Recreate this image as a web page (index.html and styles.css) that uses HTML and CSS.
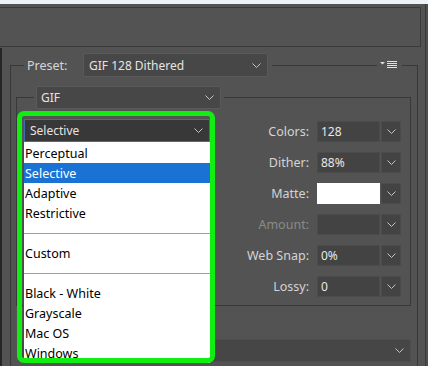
FILE: index.html
```html
<!DOCTYPE html>
<html>
<head>
<meta charset="utf-8">
<link rel="stylesheet" href="styles.css">
</head>
<body>
<div class="topstrip"></div>
<div class="app">
  <div class="main">
    <div class="toppanel"></div>
    <div class="content">
      <div class="outer">
        <div class="outer-head">
          <div class="mask mask-preset">
            <span class="lbl lbl-preset">Preset:</span>
            <div class="dd dd-preset"><span class="dd-text">GIF 128 Dithered</span><svg class="chev" width="9" height="5" viewBox="0 0 9 5"><polyline points="0.5,0.5 4.5,4.5 8.5,0.5"/></svg></div>
          </div>
          <div class="spacer"></div>
          <div class="mask mask-icon">
            <svg class="menu-icon" width="17" height="10" viewBox="0 0 17 10">
              <polygon points="0,2 5,2 2.5,4.6" fill="#e0e0e0"/>
              <line x1="7" y1="1.5" x2="17" y2="1.5"/>
              <line x1="7" y1="3.5" x2="17" y2="3.5"/>
              <line x1="7" y1="5.5" x2="17" y2="5.5"/>
              <line x1="7" y1="7.5" x2="17" y2="7.5"/>
            </svg>
          </div>
        </div>
        <div class="inner">
          <div class="inner-head">
            <div class="mask mask-format">
              <div class="dd dd-format"><span class="dd-text">GIF</span><svg class="chev" width="9" height="5" viewBox="0 0 9 5"><polyline points="0.5,0.5 4.5,4.5 8.5,0.5"/></svg></div>
            </div>
          </div>
          <div class="grid">
            <div class="reduction">
              <div class="dd dd-sel"><span class="dd-text">Selective</span><svg class="chev" width="9" height="5" viewBox="0 0 9 5"><polyline points="0.5,0.5 4.5,4.5 8.5,0.5"/></svg></div>
              <ul class="menu">
                <li>Perceptual</li>
                <li class="active">Selective</li>
                <li>Adaptive</li>
                <li>Restrictive</li>
                <li class="sep"></li>
                <li>Custom</li>
                <li class="sep"></li>
                <li>Black - White</li>
                <li>Grayscale</li>
                <li>Mac OS</li>
                <li>Windows</li>
              </ul>
              <div class="highlight"></div>
            </div>
            <div class="row r1"><span class="lbl">Colors:</span><div class="field">128</div><div class="btn"><svg class="chev" width="9" height="5" viewBox="0 0 9 5"><polyline points="0.5,0.5 4.5,4.5 8.5,0.5"/></svg></div></div>
            <div class="row r2"><span class="lbl">Dither:</span><div class="field">88%</div><div class="btn"><svg class="chev" width="9" height="5" viewBox="0 0 9 5"><polyline points="0.5,0.5 4.5,4.5 8.5,0.5"/></svg></div></div>
            <div class="row r3"><span class="lbl">Matte:</span><div class="field field-white"></div><div class="btn"><svg class="chev" width="9" height="5" viewBox="0 0 9 5"><polyline points="0.5,0.5 4.5,4.5 8.5,0.5"/></svg></div></div>
            <div class="row r4"><span class="lbl lbl-dim">Amount:</span><div class="field"></div><div class="btn"><svg class="chev" width="9" height="5" viewBox="0 0 9 5"><polyline points="0.5,0.5 4.5,4.5 8.5,0.5"/></svg></div></div>
            <div class="row r5"><span class="lbl">Web Snap:</span><div class="field">0%</div><div class="btn"><svg class="chev" width="9" height="5" viewBox="0 0 9 5"><polyline points="0.5,0.5 4.5,4.5 8.5,0.5"/></svg></div></div>
            <div class="row r6"><span class="lbl">Lossy:</span><div class="field">0</div><div class="btn"><svg class="chev" width="9" height="5" viewBox="0 0 9 5"><polyline points="0.5,0.5 4.5,4.5 8.5,0.5"/></svg></div></div>
          </div>
        </div>
        <div class="dd dd-bottom"><span class="dd-text"></span><svg class="chev" width="9" height="5" viewBox="0 0 9 5"><polyline points="0.5,0.5 4.5,4.5 8.5,0.5"/></svg></div>
      </div>
    </div>
  </div>
  <div class="edge"></div>
</div>
</body>
</html>
```

FILE: styles.css
```css
* { box-sizing: border-box; }
html, body { margin: 0; padding: 0; }
body {
  width: 428px;
  height: 366px;
  overflow: hidden;
  background: #535353;
  font-family: "Noto Sans", "Open Sans", sans-serif;
  font-size: 12px;
  color: #d6d6d6;
}
.topstrip { height: 4px; background: #edf2f8; }
.app { display: flex; height: 362px; }
.main { flex: 1; display: flex; flex-direction: column; min-width: 0; }
.edge { width: 3px; background: #4e4e4e; border-left: 1px solid #3a3a3a; }
.toppanel {
  height: 40px;
  margin: 3px 4px 0 0;
  border: 1px solid #3a3a3a;
  border-left: none;
  background: #535353;
}
.content {
  flex: 1;
  display: flex;
  flex-direction: column;
  border-left: 2px solid #262626;
  margin-top: 1px;
}
.outer {
  flex: 1;
  margin: 17px 7px 0 8px;
  border: 1px solid #383838;
  border-bottom: none;
  display: flex;
  flex-direction: column;
}
.outer-head {
  margin-top: -13px;
  height: 24px;
  display: flex;
  align-items: center;
  padding: 0 15px 0 13px;
}
.mask { background: #535353; display: flex; align-items: center; height: 100%; }
.mask-preset { padding: 0 4px 0 3px; }
.lbl-preset { width: 56px; color: #d6d6d6; font-size: 12.5px; }
.spacer { flex: 1; }
.mask-icon { padding: 0 5px 0 3px; }
.menu-icon line { stroke: #e0e0e0; stroke-width: 1; }

.dd {
  display: flex;
  align-items: center;
  justify-content: space-between;
  background: #474747;
  border: 1px solid #5a5a5a;
  border-radius: 2px;
  color: #e4e4e4;
}
.chev polyline { fill: none; stroke: #c4c4c4; stroke-width: 1; }
.dd-preset { width: 185px; height: 24px; padding: 0 6px 0 5px; }
.dd-format { width: 185px; height: 23px; padding: 0 6px 0 4px; }

.inner {
  margin: 20px 6px 0 5px;
  border: 1px solid #383838;
}
.inner-head {
  margin-top: -12px;
  height: 23px;
  display: flex;
  padding-left: 17px;
}
.mask-format { padding: 0 3px 0 2px; }

.grid {
  display: grid;
  grid-template-columns: 186px 1fr;
  grid-template-rows: repeat(6, 21px);
  row-gap: 10px;
  padding: 12px 9px 8px 7px;
}
.reduction { grid-column: 1; grid-row: 1; position: relative; }
.dd-sel {
  height: 23px;
  margin-top: -2px;
  background: #383838;
  border: 1px solid #3f6db5;
  border-radius: 0;
  padding: 0 6px 0 5px;
}
.menu {
  position: absolute;
  left: -1px;
  top: 21px;
  width: 187px;
  margin: 0;
  padding: 1px 0 0 0;
  list-style: none;
  background: #ffffff;
  border-left: 1px solid #4a4a4a;
  color: #000;
  font-size: 12.5px;
  z-index: 1;
}
.menu li { height: 20px; line-height: 21px; padding-left: 1px; white-space: nowrap; }
.menu li.active { background: #1a72d4; color: #fff; }
.menu li.sep { display: flex; align-items: center; padding: 0; }
.menu li.sep::before { content: ""; flex: 1; height: 1px; background: #a0a0a0; }
.highlight {
  position: absolute;
  left: -7px;
  top: -10px;
  width: 198px;
  height: 252px;
  border: 5px solid #11ee11;
  border-radius: 7px;
  z-index: 2;
}

.row { grid-column: 2; display: flex; align-items: center; }
.r1 { grid-row: 1; } .r2 { grid-row: 2; } .r3 { grid-row: 3; }
.r4 { grid-row: 4; } .r5 { grid-row: 5; } .r6 { grid-row: 6; }
.row .lbl { flex: 1; text-align: right; margin-right: 8px; color: #d4d4d4; font-size: 12.5px; }
.row .lbl-dim { color: #8a8a8a; }
.field {
  width: 63px;
  height: 21px;
  background: #434343;
  border: 1px solid #4b4b4b;
  color: #e8e8e8;
  padding-left: 3px;
  line-height: 19px;
}
.field-white { background: #ffffff; border-color: #ffffff; }
.btn {
  width: 20px;
  height: 21px;
  margin-left: 1px;
  background: #434343;
  border: 1px solid #4b4b4b;
  display: flex;
  align-items: center;
  justify-content: center;
}
.dd-bottom {
  height: 23px;
  margin: 33px 6px 0 7px;
  background: #464646;
  border: 1px solid #4e4e4e;
  padding: 0 6px 0 5px;
}
```
